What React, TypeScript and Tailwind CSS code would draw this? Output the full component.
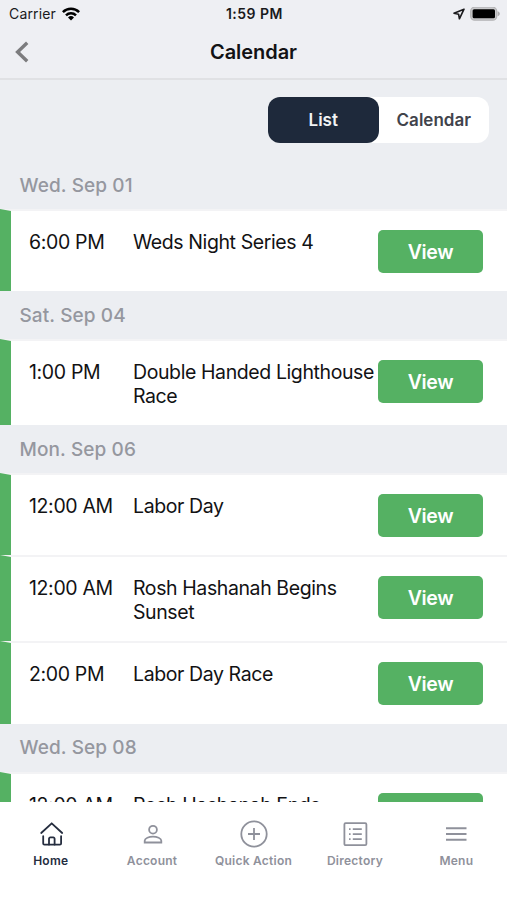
import { useState } from 'react';
import type { ReactNode } from 'react';
import clsx from 'clsx';

interface CalendarEvent {
  time: string;
  title: string;
}

interface EventDay {
  label: string;
  events: CalendarEvent[];
}

const days: EventDay[] = [
  { label: 'Wed. Sep 01', events: [{ time: '6:00 PM', title: 'Weds Night Series 4' }] },
  { label: 'Sat. Sep 04', events: [{ time: '1:00 PM', title: 'Double Handed Lighthouse Race' }] },
  {
    label: 'Mon. Sep 06',
    events: [
      { time: '12:00 AM', title: 'Labor Day' },
      { time: '12:00 AM', title: 'Rosh Hashanah Begins Sunset' },
      { time: '2:00 PM', title: 'Labor Day Race' },
    ],
  },
  { label: 'Wed. Sep 08', events: [{ time: '12:00 AM', title: 'Rosh Hashanah Ends' }] },
];

function StatusBar() {
  return (
    <div className="grid h-7 grid-cols-3 items-center pl-[9px] pr-[7px] text-[14px] leading-none text-[#1a1a1c]">
      <div className="flex items-center gap-[6px]">
        <span className="tracking-[0.15px]">Carrier</span>
        <svg width="18" height="14" viewBox="0 0 18 14" fill="none" stroke="#000" strokeWidth="2.5">
          <path d="M.9 5.1a11.5 11.5 0 0 1 16.2 0" />
          <path d="M4 8.3a7.1 7.1 0 0 1 10 0" />
          <path d="M9 13.4 6 10.4a4.3 4.3 0 0 1 6 0Z" fill="#000" stroke="none" />
        </svg>
      </div>
      <span className="text-center font-semibold tracking-[0.5px]">1:59 PM</span>
      <div className="flex items-center justify-end gap-[5px]">
        <svg width="12" height="12" viewBox="0 0 12 12" fill="none" stroke="#1a1a1c" strokeWidth="1.6" strokeLinejoin="round">
          <path d="M11 1.2 1 5.2l4.6 1 .8 4.6Z" />
        </svg>
        <svg width="30" height="15" viewBox="0 0 30 15">
          <rect x=".7" y=".2" width="26" height="13" rx="4" fill="#c9c9cb" stroke="#b4b4b6" strokeWidth="1.3" />
          <rect x="2.6" y="2.2" width="22.4" height="9" rx="1.5" fill="#000" />
          <path d="M27.6 4.2v5c1.8-.6 2.2-1.6 2.2-2.5s-.4-1.9-2.2-2.5Z" fill="#acacae" />
        </svg>
      </div>
    </div>
  );
}

function EventRow({ event }: { event: CalendarEvent }) {
  return (
    <div className="flex min-h-[82.2px] shrink-0 items-start border-t-2 border-l-[11px] border-t-[#f3f3f5] border-l-[#55b163] bg-white pr-6 pb-[17.2px] pl-[18px]">
      <span className="w-[104px] shrink-0 pt-5 text-[19.5px] leading-[23.4px] tracking-[-0.35px]">{event.time}</span>
      <span className="w-[245px] shrink-0 pt-5 text-[19.5px] leading-[23.4px] tracking-[-0.4px]">{event.title}</span>
      <button className="mt-[19px] h-[43px] w-[105px] shrink-0 rounded-[5px] bg-[#55b163] pt-0.5 text-[19.5px] font-semibold tracking-[-0.3px] text-white">
        View
      </button>
    </div>
  );
}

function Tab({ label, active, children }: { label: string; active?: boolean; children: ReactNode }) {
  return (
    <button className={clsx('flex flex-1 flex-col items-center', active ? 'text-[#252d3f]' : 'text-[#8f919b]')}>
      <svg width="30" height="30" viewBox="0 0 30 30" fill="none" stroke="currentColor" strokeWidth="1.8">
        {children}
      </svg>
      <span className="mt-[5px] text-[12px] leading-[14px] font-semibold tracking-[0.25px]">{label}</span>
    </button>
  );
}

export default function App() {
  const [view, setView] = useState('List');

  return (
    <div className="flex h-[900px] w-[507px] flex-col overflow-hidden bg-white font-['Inter',sans-serif] text-[#121214]">
      <header className="h-20 shrink-0 border-b-2 border-[#e0e1e4] bg-[#eeeff3]">
        <StatusBar />
        <div className="grid h-12 grid-cols-3 items-center px-[15px]">
          <svg width="15" height="22" viewBox="0 0 15 22" fill="none" stroke="#7c7c7e" strokeWidth="3.4">
            <path d="M12.2 1.8 2.6 11l9.6 9.2" />
          </svg>
          <h1 className="text-center text-[20px] font-semibold tracking-[-0.05px]">Calendar</h1>
        </div>
      </header>

      <main className="flex h-[722px] shrink-0 flex-col overflow-hidden bg-[#eceef2]">
        <div className="flex h-[81px] shrink-0 justify-end pt-[17px] pr-[18px]">
          <div className="flex h-[46px] w-[221px] rounded-[12px] bg-white">
            {['List', 'Calendar'].map((name) => (
              <button
                key={name}
                onClick={() => setView(name)}
                className={clsx(
                  'flex-1 rounded-[12px] pt-0.5 text-[17px] font-semibold',
                  view === name ? 'bg-[#1e293b] text-[#f1f3f5]' : 'text-[#41434b]',
                )}
              >
                {name}
              </button>
            ))}
          </div>
        </div>

        {days.map((day) => (
          <section key={day.label} className="shrink-0">
            <h2 className="flex h-12 items-center pt-0.5 pl-[19.5px] text-[19px] font-medium tracking-[0.1px] text-[#95979f]">
              {day.label}
            </h2>
            {day.events.map((event) => (
              <EventRow key={event.title} event={event} />
            ))}
          </section>
        ))}
      </main>

      <nav className="flex flex-1 bg-white pt-[17px]">
        <Tab label="Home" active>
          <g strokeLinejoin="round" strokeLinecap="round">
            <path d="M5.2 14 15.7 4.3 26.2 14" />
            <path d="M7.2 17.2v7.3a1.2 1.2 0 0 0 1.2 1.2h15.5a1.2 1.2 0 0 0 1.2-1.2v-7.3" />
            <path d="M13 25.5v-5.8a1.3 1.3 0 0 1 1.3-1.3h3a1.3 1.3 0 0 1 1.3 1.3v5.8" />
          </g>
        </Tab>
        <Tab label="Account">
          <circle cx="16" cy="10.7" r="3.9" />
          <path d="M7.7 23.5v-1.8c0-2.5 4.3-4 8.3-4s8.3 1.5 8.3 4v1.8Z" />
        </Tab>
        <Tab label="Quick Action">
          <circle cx="15" cy="15" r="12.7" />
          <path d="M15 9v12M9 15h12" />
        </Tab>
        <Tab label="Directory">
          <rect x="4.4" y="4.2" width="22" height="22" rx="1.2" />
          <path d="M12.8 10.2h9M12.8 15.2h9M12.8 20.2h9M9 10.2h1.6M9 15.2h1.6M9 20.2h1.6" />
        </Tab>
        <Tab label="Menu">
          <path d="M5 9.2h20.5M5 15h20.5M5 20.8h20.5" strokeWidth="2" />
        </Tab>
      </nav>
    </div>
  );
}
